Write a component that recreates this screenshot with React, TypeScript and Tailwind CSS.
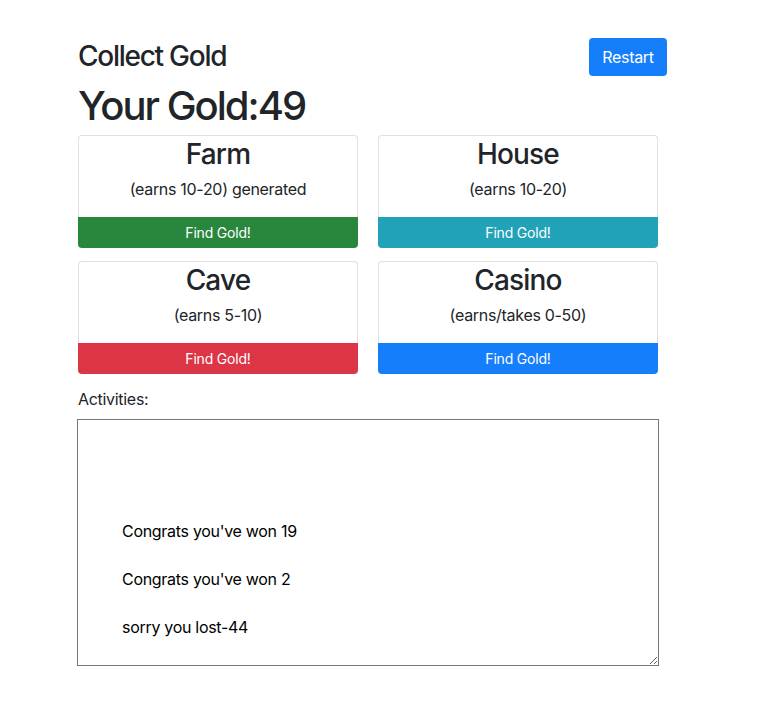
import React from "react";

const cards = [
  { title: "Farm", sub: "(earns 10-20) generated", color: "bg-[#28873c]" },
  { title: "House", sub: "(earns 10-20)", color: "bg-[#22a2b8]" },
  { title: "Cave", sub: "(earns 5-10)", color: "bg-[#dc3545]" },
  { title: "Casino", sub: "(earns/takes 0-50)", color: "bg-[#157efb]" },
];

function Card({ title, sub, color }: { title: string; sub: string; color: string }) {
  return (
    <div className="flex flex-col w-[280px]">
      <div className="h-[82px] border-t border-l border-r border-[#e1e1e1] rounded-t-[4px] flex flex-col items-center">
        <h3 className="text-[28px] leading-[33.6px] font-medium text-[#212529] mt-[2px] tracking-[-0.03em]">{title}</h3>
        <p className="text-[16px] leading-[24px] text-[#212529] mt-[5px] tracking-[-0.3px]">{sub}</p>
      </div>
      <button className={`h-[31px] w-full ${color} text-white text-[14px] rounded-b-[4px] tracking-[-0.2px]`}>Find Gold!</button>
    </div>
  );
}

export default function App() {
  return (
    <div className="bg-white min-h-[723px] pl-[78px] pt-[38px]" style={{ fontFamily: "Inter, 'Noto Sans', sans-serif" }}>
      <div className="w-[589px] flex justify-between items-start">
        <h3 className="text-[28px] leading-[33.6px] font-medium text-[#212529] mt-[2px] tracking-[-0.045em]">Collect Gold</h3>
        <button className="h-[38px] w-[78px] bg-[#157efb] text-white text-[16px] rounded-[4px] tracking-[-0.3px]">Restart</button>
      </div>
      <h1 className="text-[40px] leading-[48px] font-medium text-[#212529] mt-[6px] tracking-[-0.05em]">Your Gold:49</h1>
      <div className="grid grid-cols-[280px_280px] gap-x-[20px] gap-y-[13px] mt-[5px]">
        {cards.map((c) => (
          <Card key={c.title} {...c} />
        ))}
      </div>
      <div className="text-[16px] leading-[24px] text-[#212529] mt-[13px] tracking-[-0.3px]">Activities:</div>
      <div className="mt-[8px] -ml-px w-[582px] h-[247px] border border-[#767676] resize overflow-auto pt-[99px] pl-[44px] flex flex-col gap-[24px] text-[16px] leading-[24px] text-black tracking-[-0.3px]">
        <div>Congrats you've won 19</div>
        <div>Congrats you've won 2</div>
        <div>sorry you lost-44</div>
      </div>
    </div>
  );
}
